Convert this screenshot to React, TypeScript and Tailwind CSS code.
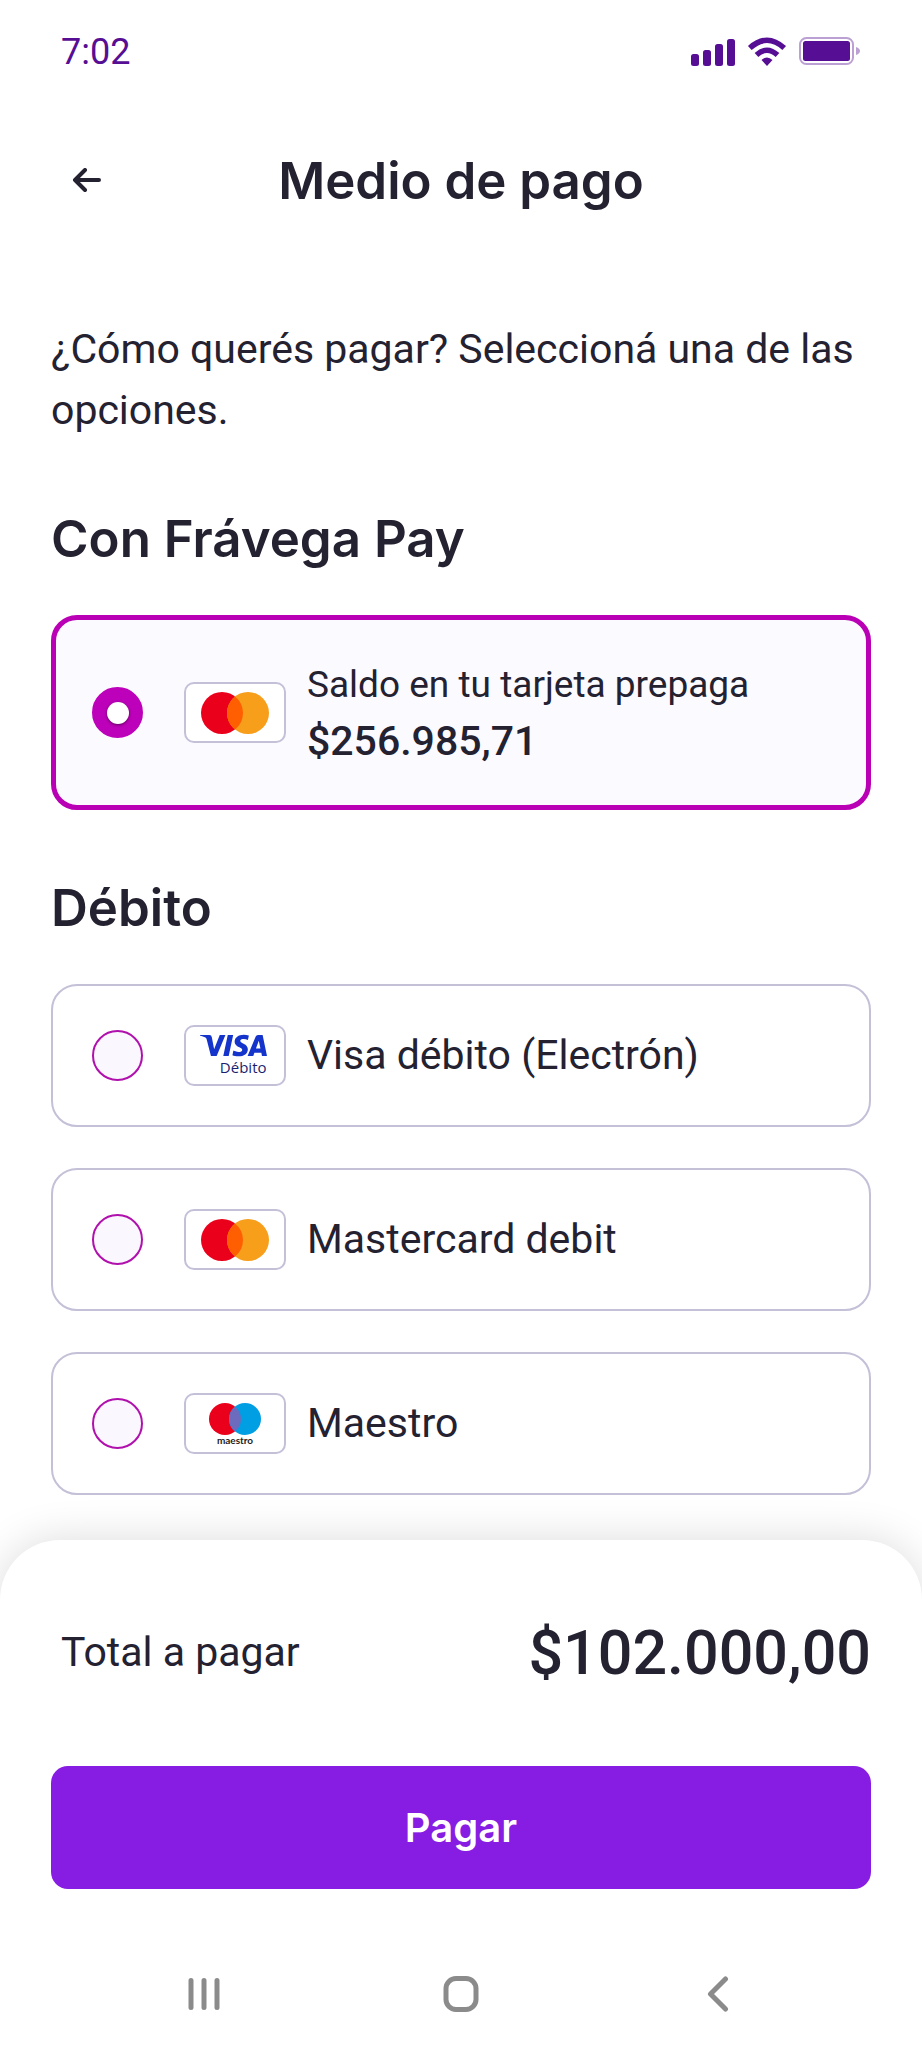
import { useState, type ReactNode } from "react";
import { SiVisa } from "react-icons/si";

function StatusIcons() {
  return (
    <svg width="170" height="30" viewBox="0 0 170 30" role="img" aria-label="Señal, wifi y batería">
      <g fill="#560e94">
        <rect x="0" y="17" width="8" height="12" rx="2.5" />
        <rect x="12" y="13" width="8" height="16" rx="2.5" />
        <rect x="24" y="7" width="8" height="22" rx="2.5" />
        <rect x="36" y="2" width="8" height="27" rx="2.5" />
        <path d="M70.500 23 q5.500 -5 11 0 l-5.500 6 z" />
        <rect x="112" y="4" width="47" height="20" rx="2.5" />
      </g>
      <g fill="none" stroke="#560e94" strokeWidth="5.500">
        <path d="M58.800 11 Q76 -4.500 93.200 11" />
        <path d="M65.500 18 Q76 8.500 86.500 18" />
      </g>
      <rect x="109" y="1" width="53" height="26" rx="6.500" fill="none" stroke="#bba0d4" strokeWidth="2" />
      <path d="M165 10 q4 1.500 4 4 t-4 4 z" fill="#bba0d4" />
    </svg>
  );
}

function CardBadge({ children }: { children: ReactNode }) {
  return (
    <span className="flex h-[61px] w-[102px] shrink-0 items-center justify-center rounded-[10px] border-2 border-[#c3c0d8] bg-white">
      {children}
    </span>
  );
}

function MastercardLogo() {
  return (
    <svg width="68" height="42" viewBox="0 0 68 42" aria-hidden="true">
      <circle cx="21" cy="21" r="21" fill="#eb001b" />
      <circle cx="47" cy="21" r="21" fill="#f79e1b" />
      <path d="M34 4.510 A21 21 0 0 1 34 37.490 A21 21 0 0 1 34 4.510Z" fill="#ff5f00" />
    </svg>
  );
}

function MaestroLogo() {
  return (
    <svg width="54" height="44" viewBox="0 0 54 44" aria-hidden="true">
      <circle cx="17" cy="17" r="16" fill="#eb001b" />
      <circle cx="37" cy="17" r="16" fill="#009ee3" />
      <path d="M27 4.510 A16 16 0 0 1 27 29.490 A16 16 0 0 1 27 4.510Z" fill="#6c6bbd" />
      <text x="27" y="42" textAnchor="middle" fontFamily="Lato, sans-serif" fontSize="10" fontWeight="700" fill="#222">
        maestro
      </text>
    </svg>
  );
}

function VisaDebitoLogo() {
  return (
    <span className="flex flex-col items-end pr-1">
      <span className="flex h-[23px] items-center overflow-hidden">
        <SiVisa size={67} color="#1434cb" aria-hidden="true" />
      </span>
      <span className="font-['Open_Sans',sans-serif] text-[15px] leading-[20px] text-[#1a1f71]">Débito</span>
    </span>
  );
}

type OptionProps = {
  id: string;
  selected: string;
  onSelect: (id: string) => void;
  logo: ReactNode;
  children: ReactNode;
};

function PaymentOption({ id, selected, onSelect, logo, children }: OptionProps) {
  return (
    <label
      htmlFor={id}
      className="flex min-h-[143px] cursor-pointer items-center rounded-[26px] border-2 border-[#c3c0d8] bg-white px-[39px] py-5 has-checked:min-h-[195px] has-checked:border-5 has-checked:border-[#b900b4] has-checked:bg-[#fbfaff] has-checked:px-9"
    >
      <input
        id={id}
        type="radio"
        name="medio"
        checked={selected === id}
        onChange={() => onSelect(id)}
        className="mr-[41px] grid size-[51px] shrink-0 cursor-pointer appearance-none place-content-center rounded-full border-2 border-[#b010ac] bg-[#faf7ff] checked:border-[#bd00b9] checked:bg-[#bd00b9] checked:before:size-[22px] checked:before:rounded-full checked:before:bg-white checked:before:shadow-[0_1px_3px_rgba(0,0,0,0.5)] checked:before:content-['']"
      />
      <CardBadge>{logo}</CardBadge>
      <span className="ml-[21px]">{children}</span>
    </label>
  );
}

export default function App() {
  const [selected, setSelected] = useState("prepaga");
  const option = { selected, onSelect: setSelected };
  const heading = "mt-[68px] mb-[46px] font-[Inter,sans-serif] text-[51px] leading-[60px] font-semibold";

  return (
    <div className="flex min-h-screen flex-col overflow-x-hidden bg-white font-[Roboto,sans-serif] text-[41px] text-[#242131]">
      <div className="flex h-[104px] items-center justify-between px-[61px] text-[36px] text-[#560e94]">
        <span>7:02</span>
        <StatusIcons />
      </div>

      <header className="grid h-[154px] grid-cols-[72px_1fr_72px] items-center px-[51px]">
        <button type="button" aria-label="Volver" className="flex size-[72px] items-center justify-center">
          <svg width="30" height="26" viewBox="0 0 30 26" fill="none" stroke="#242131" strokeWidth="4" strokeLinecap="round" strokeLinejoin="round" aria-hidden="true">
            <path d="M27 12H3M13 2L3 12l10 10" />
          </svg>
        </button>
        <h1 className="text-center font-[Inter,sans-serif] text-[51px] leading-[60px] font-semibold">Medio de pago</h1>
      </header>

      <main className="grow px-[51px] pt-[61px] pb-[45px]">
        <p className="leading-[61px]">¿Cómo querés pagar? Seleccioná una de las opciones.</p>

        <section>
          <h2 className={heading}>Con Frávega Pay</h2>
          <PaymentOption id="prepaga" {...option} logo={<MastercardLogo />}>
            <span className="block text-[37px] leading-[56px]">Saldo en tu tarjeta prepaga</span>
            <span className="block leading-[56px] font-medium">$256.985,71</span>
          </PaymentOption>
        </section>

        <section>
          <h2 className={heading}>Débito</h2>
          <div className="flex flex-col gap-[41px]">
            <PaymentOption id="visa" {...option} logo={<VisaDebitoLogo />}>
              Visa débito (Electrón)
            </PaymentOption>
            <PaymentOption id="mastercard" {...option} logo={<MastercardLogo />}>
              Mastercard debit
            </PaymentOption>
            <PaymentOption id="maestro" {...option} logo={<MaestroLogo />}>
              Maestro
            </PaymentOption>
          </div>
        </section>
      </main>

      <footer className="relative rounded-t-[60px] bg-white shadow-[0_0_44px_rgba(0,0,0,0.14)]">
        <div className="px-[51px] pt-[77px]">
          <div className="flex items-center justify-between pl-[10px]">
            <span>Total a pagar</span>
            <span className="text-[61px] leading-[72px] font-medium">$102.000,00</span>
          </div>
          <button type="button" className="mt-[77px] h-[123px] w-full rounded-[17px] bg-[#871de2] font-[Inter,sans-serif] text-[40px] font-semibold text-white">
            Pagar
          </button>
        </div>

        <nav className="mt-[50px] grid h-[109px] grid-cols-3 px-[75px]" aria-label="Sistema">
          <button type="button" aria-label="Recientes" className="flex items-center justify-center">
            <svg width="32" height="36" viewBox="0 0 32 36" stroke="#8b8b8b" strokeWidth="5" strokeLinecap="round" aria-hidden="true">
              <path d="M3 4.500v27M16 4.500v27M29 4.500v27" />
            </svg>
          </button>
          <button type="button" aria-label="Inicio" className="flex items-center justify-center">
            <svg width="36" height="36" viewBox="0 0 36 36" fill="none" stroke="#8b8b8b" strokeWidth="5" aria-hidden="true">
              <rect x="3" y="2.500" width="30" height="31" rx="10" />
            </svg>
          </button>
          <button type="button" aria-label="Atrás" className="flex items-center justify-center">
            <svg width="22" height="36" viewBox="0 0 22 36" fill="none" stroke="#8b8b8b" strokeWidth="5" strokeLinecap="round" strokeLinejoin="round" aria-hidden="true">
              <path d="M18.500 3L3.500 18l15 15" />
            </svg>
          </button>
        </nav>
      </footer>
    </div>
  );
}
